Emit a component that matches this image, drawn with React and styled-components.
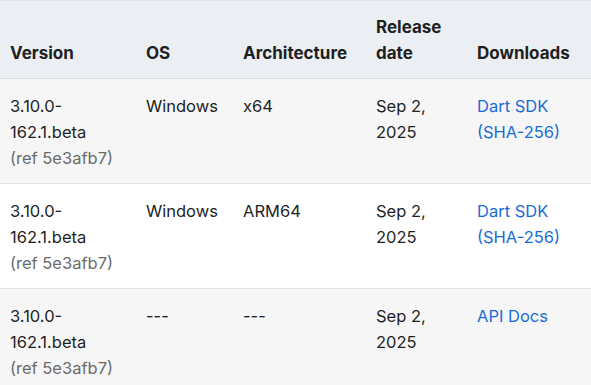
import React from "react";
import styled, { createGlobalStyle } from "styled-components";

const GlobalStyle = createGlobalStyle`
  html, body {
    margin: 0;
    padding: 0;
    background: #ffffff;
  }
  body {
    font-family: Inter, "Open Sans", Arial, sans-serif;
    color: #1f1f1f;
  }
`;

const Table = styled.table`
  width: 591px;
  border-collapse: collapse;
  table-layout: fixed;
  font-size: 16px;
  line-height: 26px;
`;

const HeadRow = styled.tr`
  background: #ebeef2;
  border-top: 1px solid #e1e4e8;
  border-bottom: 1px solid #dadee3;
`;

const HeadCell = styled.th`
  text-align: left;
  vertical-align: bottom;
  font-size: 17px;
  font-weight: 700;
  padding: 13px 10px 12px;
  color: #1f1f1f;
`;

const Row = styled.tr`
  background: ${(p) => (p.$striped ? "#f6f6f6" : "#ffffff")};
  border-bottom: 1px solid #e3e4e6;
`;

const Cell = styled.td`
  vertical-align: top;
  padding: 14px 10px 12px;
  font-size: 16.5px;
  color: #1f1f1f;
`;

const Muted = styled.span`
  display: block;
  color: #6b6b6b;
`;

const Link = styled.a`
  color: #1a6bd8;
  text-decoration: none;
`;

const widths = [136, 97, 133, 101, 124];

const rows = [
  { os: "Windows", arch: "x64", links: ["Dart SDK", "(SHA-256)"] },
  { os: "Windows", arch: "ARM64", links: ["Dart SDK", "(SHA-256)"] },
  { os: "---", arch: "---", links: ["API Docs"] },
];

export default function App() {
  return (
    <>
      <GlobalStyle />
      <Table>
        <colgroup>
          {widths.map((w, i) => (
            <col key={i} style={{ width: w }} />
          ))}
        </colgroup>
        <thead>
          <HeadRow>
            <HeadCell>Version</HeadCell>
            <HeadCell>OS</HeadCell>
            <HeadCell>Architecture</HeadCell>
            <HeadCell>
              Release
              <br />
              date
            </HeadCell>
            <HeadCell>Downloads</HeadCell>
          </HeadRow>
        </thead>
        <tbody>
          {rows.map((r, i) => (
            <Row key={i} $striped={i % 2 === 0}>
              <Cell>
                3.10.0-
                <br />
                162.1.beta
                <Muted>(ref 5e3afb7)</Muted>
              </Cell>
              <Cell>{r.os}</Cell>
              <Cell>{r.arch}</Cell>
              <Cell>
                Sep 2,
                <br />
                2025
              </Cell>
              <Cell>
                {r.links.map((l, j) => (
                  <React.Fragment key={l}>
                    {j > 0 && <br />}
                    <Link href="#">{l}</Link>
                  </React.Fragment>
                ))}
              </Cell>
            </Row>
          ))}
        </tbody>
      </Table>
    </>
  );
}
